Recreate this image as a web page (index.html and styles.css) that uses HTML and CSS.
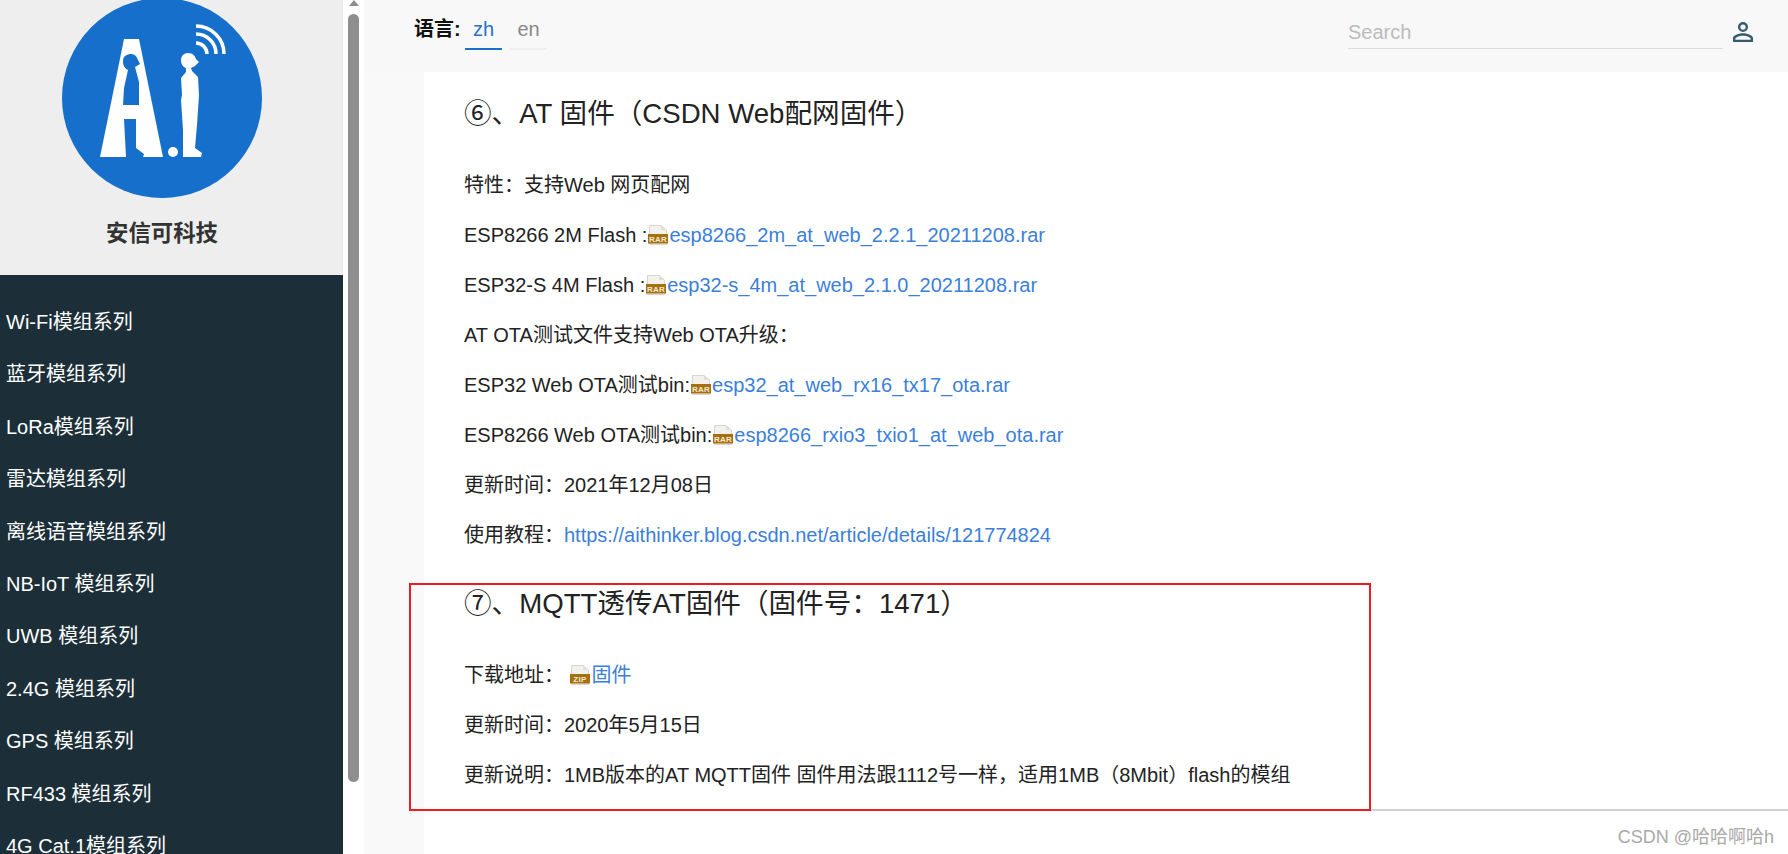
FILE: index.html
```html
<!DOCTYPE html>
<html lang="zh">
<head>
<meta charset="utf-8">
<title>安信可科技</title>
<link rel="stylesheet" href="styles.css">
</head>
<body>
<aside class="sidebar">
  <div class="brand">
    <svg class="logo" width="343" height="203" viewBox="0 0 343 203">
      <circle cx="162" cy="98" r="100" fill="#166fcb"/>
      <path fill="#fff" d="M124 39H139L163 157H143L144 154L136 148V119H124L126 157H100Z"/>
      <path fill="#166fcb" d="M123 105L124 88L128 70C124 68 123 65 123 61C123 56 127 54 131 54C135 54 137 57 138 60L140 64L135 67L139 82L139 105Z"/>
      <path fill="#fff" d="M188 53C193 53 195 56 196 59L199 62L195 66L191 68L192 71L198 77L199 95L197 125L195 148L202 153L201 157H183V130L181 100L182 95L181 78L186 72L186 68C183 67 181 64 181 60C181 56 184 53 188 53Z"/>
      <circle cx="173" cy="152" r="5" fill="#fff"/>
      <g fill="none" stroke="#fff" stroke-width="3.500">
        <path d="M196 26A28 28 0 0 1 224 54"/>
        <path d="M196 34A20 20 0 0 1 216 54"/>
        <path d="M196 43A11 11 0 0 1 207 54"/>
      </g>
    </svg>
    <h1 class="brand-name">安信可科技</h1>
  </div>
  <nav class="menu">
    <a class="menu-item">Wi-Fi模组系列</a>
    <a class="menu-item">蓝牙模组系列</a>
    <a class="menu-item">LoRa模组系列</a>
    <a class="menu-item">雷达模组系列</a>
    <a class="menu-item">离线语音模组系列</a>
    <a class="menu-item">NB-IoT 模组系列</a>
    <a class="menu-item">UWB 模组系列</a>
    <a class="menu-item">2.4G 模组系列</a>
    <a class="menu-item">GPS 模组系列</a>
    <a class="menu-item">RF433 模组系列</a>
    <a class="menu-item">4G Cat.1模组系列</a>
  </nav>
</aside>
<div class="scrollbar"><span class="scroll-arrow"></span><span class="scroll-thumb"></span></div>
<div class="main">
  <header class="topbar">
    <strong class="lang-label">语言:</strong>
    <div class="tabs">
      <a class="tab tab-active">zh</a>
      <a class="tab">en</a>
    </div>
    <div class="search">Search</div>
    <svg class="user" width="30" height="30" viewBox="0 0 24 24"><path fill="#37596f" d="M12 5.900a2.100 2.100 0 1 1 0 4.200 2.100 2.100 0 0 1 0-4.200m0 9c2.970 0 6.100 1.460 6.100 2.100V18.100H5.900V17c0-.64 3.130-2.100 6.100-2.100M12 4a4 4 0 1 0 0 8 4 4 0 0 0 0-8zm0 9c-2.670 0-8 1.340-8 4v3h16v-3c0-2.660-5.330-4-8-4z"/></svg>
  </header>
  <div class="layout">
    <main class="content">
      <h2 class="title">⑥、AT 固件（CSDN Web配网固件）</h2>
      <p class="line">特性：支持Web 网页配网</p>
      <p class="line">ESP8266 2M Flash :<svg class="file" viewBox="0 0 20 20"><use href="#rar"/></svg><a class="link">esp8266_2m_at_web_2.2.1_20211208.rar</a></p>
      <p class="line">ESP32-S 4M Flash :<svg class="file" viewBox="0 0 20 20"><use href="#rar"/></svg><a class="link">esp32-s_4m_at_web_2.1.0_20211208.rar</a></p>
      <p class="line">AT OTA测试文件支持Web OTA升级：</p>
      <p class="line">ESP32 Web OTA测试bin:<svg class="file" viewBox="0 0 20 20"><use href="#rar"/></svg><a class="link">esp32_at_web_rx16_tx17_ota.rar</a></p>
      <p class="line">ESP8266 Web OTA测试bin:<svg class="file" viewBox="0 0 20 20"><use href="#rar"/></svg><a class="link">esp8266_rxio3_txio1_at_web_ota.rar</a></p>
      <p class="line">更新时间：2021年12月08日</p>
      <p class="line">使用教程：<a class="link">https://aithinker.blog.csdn.net/article/details/121774824</a></p>
      <h2 class="title title-next">⑦、MQTT透传AT固件（固件号：1471）</h2>
      <p class="line">下载地址： <svg class="file file-zip" viewBox="0 0 20 20"><use href="#zip"/></svg><a class="link">固件</a></p>
      <p class="line">更新时间：2020年5月15日</p>
      <p class="line">更新说明：1MB版本的AT MQTT固件 固件用法跟1112号一样，适用1MB（8Mbit）flash的模组</p>
      <hr class="rule">
    </main>
    <div class="annotation"></div>
    <div class="watermark">CSDN @哈哈啊哈h</div>
  </div>
</div>
<svg class="defs" width="0" height="0">
  <defs>
    <g id="rar">
      <path fill="#f3f1ec" stroke="#d8d5cf" d="M1.500.5H13L18.500 5V19.500H1.500Z"/>
      <path fill="#e2dfd8" d="M13 .5V5H18.500Z"/>
      <rect y="9" width="20" height="9.500" fill="#a5700f"/>
      <text x="10" y="16.500" text-anchor="middle" class="file-label">RAR</text>
    </g>
    <g id="zip">
      <path fill="#f3f1ec" stroke="#d8d5cf" d="M1.500.5H13L18.500 5V19.500H1.500Z"/>
      <path fill="#e2dfd8" d="M13 .5V5H18.500Z"/>
      <rect y="9" width="20" height="9.500" fill="#a5700f"/>
      <text x="10" y="16.500" text-anchor="middle" class="file-label">ZIP</text>
    </g>
  </defs>
</svg>
</body>
</html>
```

FILE: styles.css
```css
* { box-sizing: border-box; }
html, body { height: 100%; }
body {
  margin: 0;
  height: 854px;
  display: flex;
  overflow: hidden;
  background: #fff;
  color: #222;
  font-family: "Liberation Sans", "Noto Sans CJK SC", sans-serif;
}
.sidebar { width: 343px; flex: none; height: 854px; display: flex; flex-direction: column; background: #1c2f38; overflow: hidden; }
.brand { height: 275px; flex: none; background: #eee; display: flex; flex-direction: column; }
.logo { display: block; flex: none; }
.brand-name { margin: 16px 0 0; text-align: center; font-size: 22.400px; line-height: 30px; font-weight: 700; color: #333; padding-right: 19px; }
.menu { display: flex; flex-direction: column; padding: 21px 0 0 6px; }
.menu-item { height: 52.400px; flex: none; line-height: 52px; font-size: 20px; color: #fff; white-space: nowrap; }
.scrollbar { width: 21px; flex: none; height: 854px; background: #fff; display: flex; flex-direction: column; align-items: center; box-shadow: 1px 0 3px rgba(0,0,0,.08); }
.scroll-arrow { width: 0; height: 0; border-left: 5px solid transparent; border-right: 5px solid transparent; border-bottom: 6px solid #8e8e8e; margin-bottom: 8px; }
.scroll-thumb { width: 11px; height: 768px; background: #8e8e8e; border-radius: 6px; }
.main { flex: 1; min-width: 0; display: flex; flex-direction: column; }
.topbar { height: 72px; flex: none; background: #f8f8f8; display: flex; align-items: flex-start; padding-left: 50px; }
.lang-label { font-size: 20px; line-height: 24px; margin-top: 17px; color: #111; width: 51px; flex: none; }
.tabs { display: flex; gap: 8px; margin-top: 14px; }
.tab { width: 37px; height: 36px; line-height: 30px; text-align: center; font-size: 20px; color: #888; border-bottom: 2px solid #eee; }
.tab-active { color: #2a70c8; border-bottom-color: #1a6fcb; }
.search { margin-left: auto; margin-top: 20px; width: 375px; height: 29px; line-height: 24px; border-bottom: 1px solid #ddd; color: #bbb; font-size: 20px; }
.user { flex: none; margin: 17px 30px 0 5px; }
.layout { flex: 1; min-height: 0; position: relative; background: #f9f9f9; padding-left: 60px; }
.content { height: 100%; background: #fff; padding: 0 0 0 40px; position: relative; }
.title { margin: 0; padding-top: 21px; font-weight: 400; font-size: 27.600px; line-height: 42px; color: #222; white-space: nowrap; }
.title-next { padding-top: 23px; }
.line { margin: 0; height: 50px; line-height: 50px; font-size: 20px; white-space: nowrap; }
.title + .line { margin-top: 25px; }
.link { color: #3b7fd9; }
.file { width: 20px; height: 20px; vertical-align: 1px; margin: -4px 1px; }
.file-zip { margin-left: 0; margin-right: 2px; }
.file-label { font: 700 8px "Liberation Sans", sans-serif; fill: #f5ead2; letter-spacing: .3px; }
.rule { position: absolute; left: 0; right: 0; top: 737px; margin: 0; border: 0; border-top: 2px solid #d2d2d2; }
.annotation { position: absolute; left: 45px; top: 511px; width: 962px; height: 228px; border: 2px solid #ed1c24; }
.watermark { position: absolute; right: 14px; top: 755px; font-size: 18px; line-height: 20px; color: #a9a9a9; }
.defs { position: absolute; }
```
